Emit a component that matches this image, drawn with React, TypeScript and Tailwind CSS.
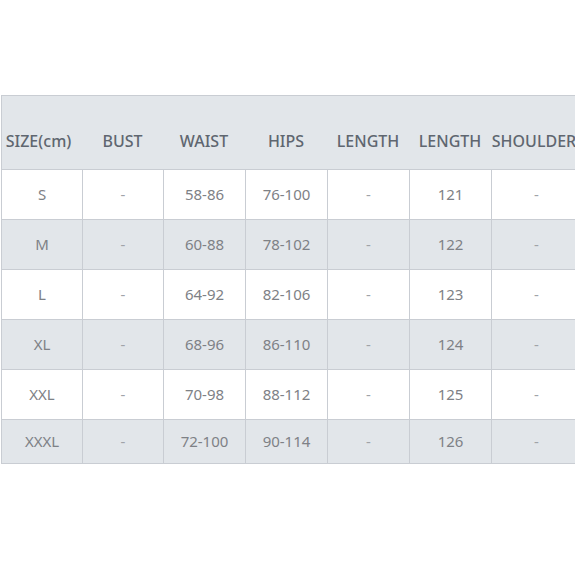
import React from "react";

const headers = ["SIZE(cm)", "BUST", "WAIST", "HIPS", "LENGTH", "LENGTH", "SHOULDER"];

const rows = [
  ["S", "-", "58-86", "76-100", "-", "121", "-"],
  ["M", "-", "60-88", "78-102", "-", "122", "-"],
  ["L", "-", "64-92", "82-106", "-", "123", "-"],
  ["XL", "-", "68-96", "86-110", "-", "124", "-"],
  ["XXL", "-", "70-98", "88-112", "-", "125", "-"],
  ["XXXL", "-", "72-100", "90-114", "-", "126", "-"],
];

const cols = "grid grid-cols-[80px_81px_82px_82px_82px_82px_90px]";

const App = () => {
  return (
    <div
      className="w-[575px] h-[575px] bg-white overflow-hidden pt-[95px] pl-[1px]"
      style={{ fontFamily: '"Noto Sans", "Open Sans", sans-serif' }}
    >
      <div className="w-[580px] border-t border-l border-[#c9cdd3]">
        <div className={`${cols} h-[74px] bg-[#e2e6ea] border-b border-[#c9cdd3]`}>
          {headers.map((h, i) => (
            <div
              key={i}
              className={`flex items-center justify-center pt-[17px] text-[16px] font-medium text-[#5f6670] whitespace-nowrap ${
                i === 0 ? "pr-[7px]" : ""
              } ${i === 6 ? "pr-[4px]" : ""}`}
            >
              {h}
            </div>
          ))}
        </div>
        {rows.map((r, ri) => (
          <div
            key={ri}
            className={`${cols} ${ri === 5 ? "h-[44px]" : "h-[50px]"} ${
              ri % 2 === 1 ? "bg-[#e2e6ea]" : "bg-white"
            } border-b border-[#c9cdd3]`}
          >
            {r.map((c, ci) => (
              <div
                key={ci}
                className={`flex items-center justify-center text-[15px] ${
                  ci > 0 ? "border-l border-[#c9cdd3]" : ""
                } ${c === "-" ? "text-[#a0a3a8]" : "text-[#7e8186]"}`}
              >
                {c}
              </div>
            ))}
          </div>
        ))}
      </div>
    </div>
  );
};

export default App;
